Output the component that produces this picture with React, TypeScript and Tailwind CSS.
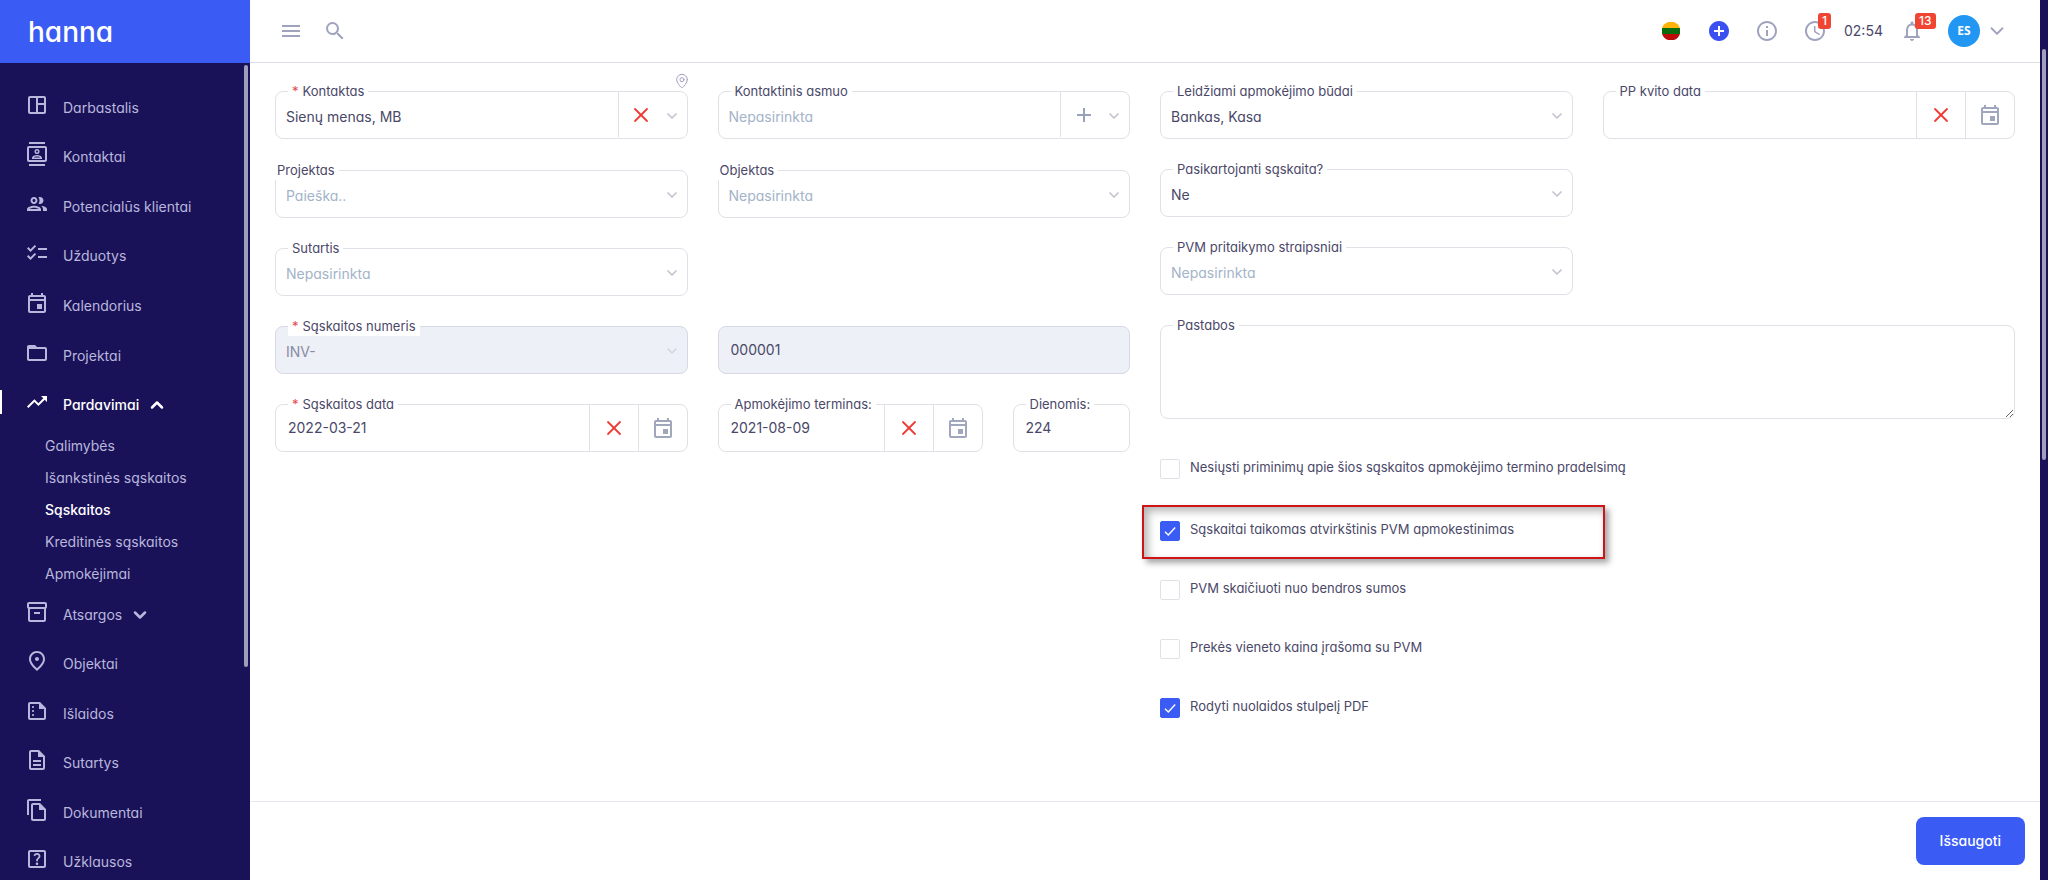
import React, { useId, useState } from "react";
import clsx from "clsx";
import { ChevronDown, ChevronUp, MapPin, X } from "lucide-react";
import {
  MdAccessTime,
  MdAdd,
  MdAddCircle,
  MdChecklist,
  MdFolderOpen,
  MdInfoOutline,
  MdMenu,
  MdOutlineContacts,
  MdOutlineDescription,
  MdOutlineEvent,
  MdOutlineFileCopy,
  MdOutlineHelpCenter,
  MdOutlineInventory2,
  MdOutlineNotifications,
  MdOutlinePeople,
  MdOutlinePlace,
  MdOutlineSpaceDashboard,
  MdOutlineSummarize,
  MdSearch,
  MdTrendingUp,
} from "react-icons/md";

interface NavItem {
  label: string;
  icon: React.ElementType;
  active?: boolean;
  arrow?: "up" | "down";
}

const topNav: NavItem[] = [
  { label: "Darbastalis", icon: MdOutlineSpaceDashboard },
  { label: "Kontaktai", icon: MdOutlineContacts },
  { label: "Potencialūs klientai", icon: MdOutlinePeople },
  { label: "Užduotys", icon: MdChecklist },
  { label: "Kalendorius", icon: MdOutlineEvent },
  { label: "Projektai", icon: MdFolderOpen },
  { label: "Pardavimai", icon: MdTrendingUp, active: true, arrow: "up" },
];

const salesNav = [
  "Galimybės",
  "Išankstinės sąskaitos",
  "Sąskaitos",
  "Kreditinės sąskaitos",
  "Apmokėjimai",
];

const bottomNav: NavItem[] = [
  { label: "Atsargos", icon: MdOutlineInventory2, arrow: "down" },
  { label: "Objektai", icon: MdOutlinePlace },
  { label: "Išlaidos", icon: MdOutlineSummarize },
  { label: "Sutartys", icon: MdOutlineDescription },
  { label: "Dokumentai", icon: MdOutlineFileCopy },
  { label: "Užklausos", icon: MdOutlineHelpCenter },
];

function NavLink({ label, icon: Icon, active, arrow }: NavItem) {
  return (
    <li className="relative flex">
      {active && (
        <span className="absolute left-0 top-2.5 h-6 w-0.5 bg-white" />
      )}
      <a
        href="#"
        className={clsx(
          "flex flex-1 items-center pl-[25px]",
          active ? "font-medium text-white" : "text-[#b9b7dc]"
        )}
      >
        <Icon size={24} className="mb-1.5 mr-3.5 shrink-0" />
        {label}
        {arrow === "up" && (
          <ChevronUp size={20} strokeWidth={3} className="ml-2" />
        )}
        {arrow === "down" && (
          <ChevronDown size={20} strokeWidth={3} className="ml-2" />
        )}
      </a>
    </li>
  );
}

function Sidebar() {
  return (
    <aside className="relative flex w-[250px] shrink-0 flex-col overflow-hidden bg-[#1a1259]">
      <a
        href="#"
        className="flex h-[63px] shrink-0 items-center bg-[#3b5bf5] pl-7 text-[28px] font-medium text-white"
      >
        hanna
      </a>
      <nav className="shrink-0 pt-5 text-sm">
        <ul className="grid h-[347px] auto-rows-fr">
          {topNav.map((item) => (
            <NavLink key={item.label} {...item} />
          ))}
        </ul>
        <ul>
          {salesNav.map((label) => (
            <li key={label}>
              <a
                href="#"
                className={clsx(
                  "flex h-8 items-center pl-[45px]",
                  label === "Sąskaitos"
                    ? "font-medium text-white"
                    : "text-[#b9b7dc]"
                )}
              >
                {label}
              </a>
            </li>
          ))}
        </ul>
        <ul className="grid h-[297px] auto-rows-fr">
          {bottomNav.map((item) => (
            <NavLink key={item.label} {...item} />
          ))}
        </ul>
      </nav>
      {/* scrollbar thumb */}
      <div className="absolute right-0.5 top-[65px] h-[602px] w-1 rounded-full bg-[#a09fbb]" />
    </aside>
  );
}

function Badge({ children }: { children: React.ReactNode }) {
  return (
    <span className="absolute -top-[6px] left-[15px] flex h-4 items-center rounded-[3px] bg-[#f04532] px-1 text-xs font-medium text-white">
      {children}
    </span>
  );
}

function Header() {
  return (
    <header className="flex h-[63px] shrink-0 items-center border-b border-[#dcdfe4] pl-[29px] pr-8 text-[#a0a3bd]">
      <button aria-label="Meniu">
        <MdMenu size={24} />
      </button>
      <button aria-label="Paieška" className="ml-5">
        <MdSearch size={24} />
      </button>
      <div className="ml-auto flex items-center">
        <button aria-label="Kalba">
          <svg width="18" height="18" viewBox="0 0 18 18">
            <clipPath id="flag">
              <circle cx="9" cy="9" r="9.4" />
            </clipPath>
            <g clipPath="url(#flag)">
              <rect width="18" height="6" fill="#fdb30b" />
              <rect y="6" width="18" height="6" fill="#0a6b0f" />
              <rect y="12" width="18" height="6" fill="#bd0a0a" />
            </g>
          </svg>
        </button>
        <button aria-label="Pridėti" className="ml-[27px] text-[#3b50f0]">
          <MdAddCircle size={24} />
        </button>
        <button aria-label="Informacija" className="ml-6">
          <MdInfoOutline size={24} />
        </button>
        <button aria-label="Laikas" className="relative ml-6">
          <MdAccessTime size={24} />
          <Badge>1</Badge>
        </button>
        <span className="ml-[17px] w-[39px] text-sm text-[#4a4868]">02:54</span>
        <button aria-label="Pranešimai" className="relative ml-[17px]">
          <MdOutlineNotifications size={24} />
          <Badge>13</Badge>
        </button>
        <button className="ml-6 flex items-center gap-1.5">
          <span className="flex size-8 items-center justify-center rounded-full bg-[#2196f3] font-['Open_Sans',sans-serif] text-xs font-bold text-white">
            ES
          </span>
          <ChevronDown size={22} />
        </button>
      </div>
    </header>
  );
}

interface FieldProps {
  label?: string;
  htmlFor?: string;
  required?: boolean;
  flush?: boolean;
  disabled?: boolean;
  className?: string;
  children: React.ReactNode;
}

// bordered box with the label sitting on its top edge
function Field({
  label,
  htmlFor,
  required,
  flush,
  disabled,
  className,
  children,
}: FieldProps) {
  return (
    <div
      className={clsx(
        "relative flex rounded-lg border",
        disabled ? "border-[#d5d9e6] bg-[#edf0f6]" : "border-[#dfe1e6]",
        className
      )}
    >
      {children}
      {label && (
        <label
          htmlFor={htmlFor}
          className={clsx(
            "absolute -top-[11px] bg-white pr-1 text-[13px] leading-5 whitespace-nowrap",
            flush ? "-left-px pl-0.5" : "left-3 pl-1"
          )}
        >
          {required && <span className="mr-1 text-[#e5484d]">*</span>}
          {label}
        </label>
      )}
    </div>
  );
}

interface SelectFieldProps {
  label: string;
  value: string;
  empty?: boolean;
  required?: boolean;
  flush?: boolean;
  disabled?: boolean;
  className?: string;
  action?: "clear" | "add";
}

function SelectField({
  label,
  value,
  empty,
  required,
  flush,
  disabled,
  className,
  action,
}: SelectFieldProps) {
  const id = useId();
  return (
    <Field
      label={label}
      htmlFor={id}
      required={required}
      flush={flush}
      disabled={disabled}
      className={clsx("h-12", className)}
    >
      <select
        id={id}
        disabled={disabled}
        className={clsx(
          "min-w-0 flex-1 appearance-none bg-transparent pl-2.5 pt-1 text-sm outline-none",
          empty && "text-[#a3b3c9]",
          disabled && "text-[#8b8aa3]"
        )}
      >
        <option>{value}</option>
      </select>
      {action && (
        <button
          type="button"
          aria-label={action === "clear" ? "Išvalyti" : "Pridėti"}
          className="flex h-[45px] w-[46px] items-center justify-center border-l border-[#dfe1e6]"
        >
          {action === "clear" ? (
            <X size={24} strokeWidth={1.8} className="text-[#ee3b33]" />
          ) : (
            <MdAdd size={24} className="text-[#97a1b8]" />
          )}
        </button>
      )}
      <ChevronDown
        size={16}
        strokeWidth={2.5}
        className={clsx(
          "mr-[7px] mt-0.5 shrink-0 self-center",
          disabled ? "text-[#d3d6df]" : "text-[#c0c4ce]"
        )}
      />
    </Field>
  );
}

interface DateFieldProps {
  label: string;
  value?: string;
  required?: boolean;
  className?: string;
}

function DateField({ label, value, required, className }: DateFieldProps) {
  const id = useId();
  return (
    <Field
      label={label}
      htmlFor={id}
      required={required}
      className={clsx("h-12", className)}
    >
      <input
        id={id}
        defaultValue={value}
        className="min-w-0 flex-1 bg-transparent pl-3 text-sm outline-none"
      />
      <button
        type="button"
        aria-label="Išvalyti"
        className="flex w-[49px] items-center justify-center border-l border-[#dfe1e6]"
      >
        <X size={24} strokeWidth={1.8} className="text-[#ee3b33]" />
      </button>
      <button
        type="button"
        aria-label="Kalendorius"
        className="flex w-[49px] items-center justify-center border-l border-[#dfe1e6]"
      >
        <MdOutlineEvent size={24} className="text-[#a0a7bd]" />
      </button>
    </Field>
  );
}

interface CheckProps {
  label: string;
  defaultChecked?: boolean;
  highlighted?: boolean;
}

function Check({ label, defaultChecked = false, highlighted }: CheckProps) {
  const [checked, setChecked] = useState(defaultChecked);
  return (
    <div className={clsx("relative flex h-5", highlighted && "mt-[3px]")}>
      {highlighted && (
        <div className="pointer-events-none absolute -left-[18px] -top-4 h-[54px] w-[463px] border-2 border-[#cf1419] shadow-[4px_4px_6px_rgba(0,0,0,0.35),inset_4px_4px_8px_rgba(0,0,0,0.3)]" />
      )}
      <label className="flex items-center gap-2.5 text-[13px]">
        <span className="relative size-5">
          <input
            type="checkbox"
            checked={checked}
            onChange={() => setChecked(!checked)}
            className="block size-5 appearance-none rounded-xs border border-[#dfe1e6] checked:border-[#3b5bf5] checked:bg-[#3b5bf5]"
          />
          {checked && (
            <svg
              viewBox="0 0 20 20"
              className="pointer-events-none absolute inset-0 size-5"
              fill="none"
              stroke="white"
              strokeWidth="1.4"
            >
              <path d="M5 10.8l3.3 3.2L15.2 6.6" />
            </svg>
          )}
        </span>
        <span className="pb-0.5">{label}</span>
      </label>
    </div>
  );
}

function InvoiceForm() {
  return (
    <form
      id="invoice"
      className="grid flex-1 grid-cols-2 content-start gap-[30px] px-[25px] pt-7"
    >
      <div className="grid grid-cols-2 content-start gap-[30px]">
        <div className="relative pb-px">
          <SelectField
            label="Kontaktas"
            value="Sienų menas, MB"
            required
            action="clear"
          />
          <MapPin
            size={16}
            strokeWidth={1.5}
            className="absolute -right-0.5 -top-[18px] text-[#a3a1c2]"
          />
        </div>
        <SelectField
          label="Kontaktinis asmuo"
          value="Nepasirinkta"
          empty
          action="add"
        />
        <SelectField label="Projektas" value="Paieška.." empty flush />
        <SelectField label="Objektas" value="Nepasirinkta" empty flush />
        <SelectField label="Sutartis" value="Nepasirinkta" empty />
        <SelectField
          label="Sąskaitos numeris"
          value="INV-"
          required
          disabled
          className="col-start-1"
        />
        <Field disabled className="h-12">
          <input
            aria-label="Numeris"
            readOnly
            defaultValue="000001"
            className="min-w-0 flex-1 bg-transparent pl-3 text-sm outline-none"
          />
        </Field>
        <DateField label="Sąskaitos data" value="2022-03-21" required />
        <div className="grid grid-cols-3 gap-[30px]">
          <DateField
            label="Apmokėjimo terminas:"
            value="2021-08-09"
            className="col-span-2"
          />
          <Field label="Dienomis:" htmlFor="days" className="h-12">
            <input
              id="days"
              defaultValue="224"
              className="min-w-0 flex-1 bg-transparent pl-3 text-sm outline-none"
            />
          </Field>
        </div>
      </div>

      <div className="grid grid-cols-2 content-start gap-[30px]">
        <SelectField label="Leidžiami apmokėjimo būdai" value="Bankas, Kasa" />
        <DateField label="PP kvito data" />
        <SelectField
          label="Pasikartojanti sąskaita?"
          value="Ne"
          className="col-start-1"
        />
        <SelectField
          label="PVM pritaikymo straipsniai"
          value="Nepasirinkta"
          empty
          className="col-start-1"
        />
        <Field label="Pastabos" htmlFor="notes" className="col-span-2">
          <textarea
            id="notes"
            className="block h-[92px] flex-1 resize-y rounded-lg bg-transparent p-3 text-sm outline-none"
          />
        </Field>
        <div className="col-span-2 flex flex-col gap-[39px] pt-2.5">
          <Check label="Nesiųsti priminimų apie šios sąskaitos apmokėjimo termino pradelsimą" />
          <Check
            label="Sąskaitai taikomas atvirkštinis PVM apmokestinimas"
            defaultChecked
            highlighted
          />
          <Check label="PVM skaičiuoti nuo bendros sumos" />
          <Check label="Prekės vieneto kaina įrašoma su PVM" />
          <Check label="Rodyti nuolaidos stulpelį PDF" defaultChecked />
        </div>
      </div>
    </form>
  );
}

export default function App() {
  return (
    <div className="flex h-screen bg-white font-['Inter',sans-serif] text-[#4a4868] [font-feature-settings:'cv11']">
      <Sidebar />
      <main className="flex min-w-0 flex-1 flex-col">
        <Header />
        <InvoiceForm />
        <footer className="flex justify-end border-t border-[#e6e8ee] px-[15px] py-[15px]">
          <button
            type="submit"
            form="invoice"
            className="h-12 rounded-lg bg-[#3b5bf5] px-6 text-sm font-medium text-white"
          >
            Išsaugoti
          </button>
        </footer>
      </main>
      <div className="w-2 shrink-0 bg-[#1a1259] px-0.5 pt-[49px]">
        <div className="h-[411px] rounded-full bg-[#a09fbb]" />
      </div>
    </div>
  );
}
